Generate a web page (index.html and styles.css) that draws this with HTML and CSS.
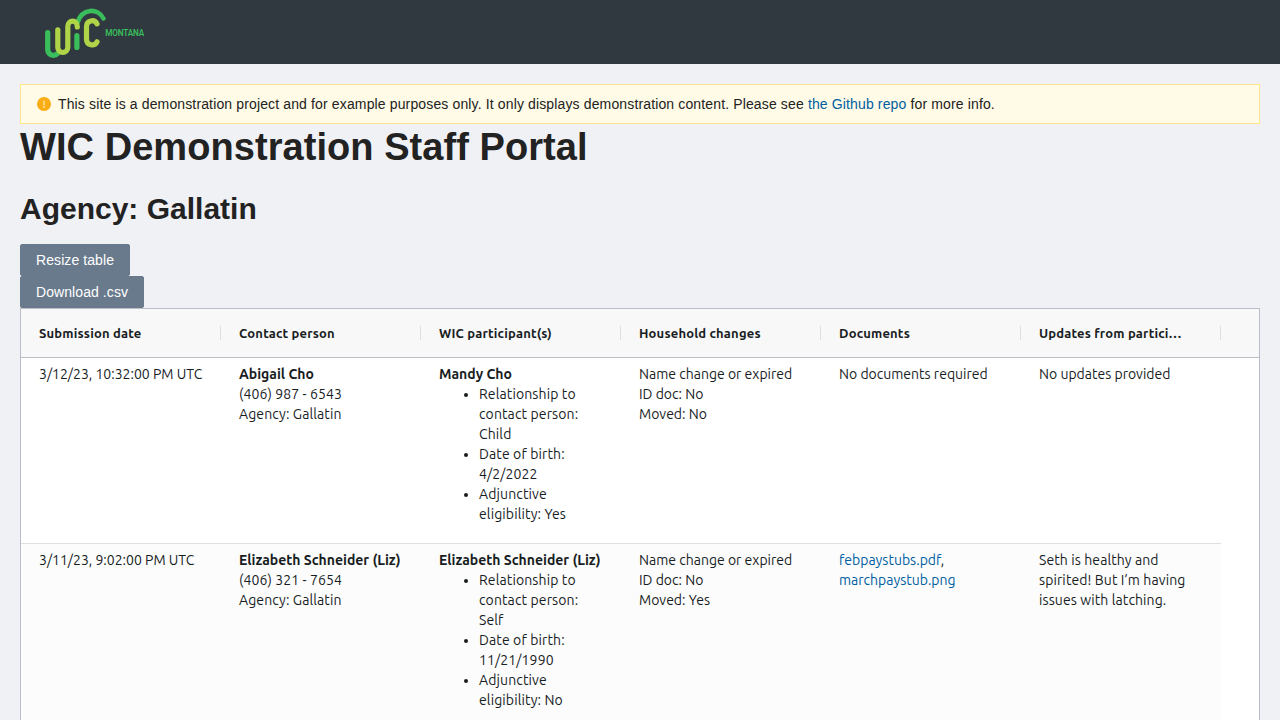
FILE: index.html
```html
<!DOCTYPE html>
<html lang="en">
<head>
<meta charset="utf-8">
<title>WIC Demonstration Staff Portal</title>
<link rel="stylesheet" href="styles.css">
</head>
<body>
<header class="site-header">
  <svg class="logo" viewBox="0 0 102 52" fill="none" stroke-width="5.200" stroke-linecap="round" role="img" aria-label="WIC Montana">
    <path stroke="#3abe5c" d="M2.700 25.500V42.500a5.800 5.800 0 0 0 9.800 4.200M31.900 28.500V40.500"/>
    <path stroke="#3abe5c" stroke-width="4.600" d="M32.500 15.500C37 1 53 .500 58.500 11.500"/>
    <path stroke="#b0d447" d="M12.800 22.800V40.500a5 5 0 0 0 10 0V19.500c0-7.100 9.500-7.100 9.500 0v.5M52 16.800c-2.500-5-10.500-3.500-10.500 2.500v13c0 6 8 7.500 10.500 2.500"/>
    <text class="logo-state" transform="translate(60.200 28.800) scale(.86 1)" x="0" y="0" textLength="45.300" lengthAdjust="spacing">MONTANA</text>
  </svg>
</header>
<main class="page">
  <div class="alert">
    <svg class="alert-icon" viewBox="0 0 14 14"><circle cx="7" cy="7" r="7" fill="#faad14"/><path fill="#fff3cf" d="M6.500 3.500h1v5h-1zM6.300 9.300h1.400v1.400H6.300z"/></svg>
    <div>This site is a demonstration project and for example purposes only. It only displays demonstration content. Please see <a href="#">the Github repo</a> for more info.</div>
  </div>
  <h1>WIC Demonstration Staff Portal</h1>
  <h2>Agency: Gallatin</h2>
  <div class="actions">
    <button class="btn" type="button">Resize table</button>
    <button class="btn" type="button">Download .csv</button>
  </div>
  <div class="grid">
    <div class="grid-head">
      <div class="head-cell">Submission date</div>
      <div class="head-cell">Contact person</div>
      <div class="head-cell">WIC participant(s)</div>
      <div class="head-cell">Household changes</div>
      <div class="head-cell">Documents</div>
      <div class="head-cell">Updates from partici…</div>
    </div>
    <div class="grid-row">
      <div class="cell">3/12/23, 10:32:00 PM UTC</div>
      <div class="cell"><strong>Abigail Cho</strong><br><span class="contact">(406) 987 - 6543<br>Agency: Gallatin</span></div>
      <div class="cell"><strong>Mandy Cho</strong>
        <ul><li>Relationship to<br>contact person:<br>Child</li><li>Date of birth:<br>4/2/2022</li><li>Adjunctive<br>eligibility: Yes</li></ul></div>
      <div class="cell">Name change or expired<br>ID doc: No<br>Moved: No</div>
      <div class="cell">No documents required</div>
      <div class="cell">No updates provided</div>
    </div>
    <div class="grid-row odd">
      <div class="cell">3/11/23, 9:02:00 PM UTC</div>
      <div class="cell"><strong>Elizabeth Schneider (Liz)</strong><br><span class="contact">(406) 321 - 7654<br>Agency: Gallatin</span></div>
      <div class="cell"><strong>Elizabeth Schneider (Liz)</strong>
        <ul><li>Relationship to<br>contact person:<br>Self</li><li>Date of birth:<br>11/21/1990</li><li>Adjunctive<br>eligibility: No</li></ul></div>
      <div class="cell">Name change or expired<br>ID doc: No<br>Moved: Yes</div>
      <div class="cell"><a href="#">febpaystubs.pdf</a>,<br><a href="#">marchpaystub.png</a></div>
      <div class="cell update">Seth is healthy and<br>spirited! But I’m having<br>issues with latching.</div>
    </div>
  </div>
</main>
</body>
</html>
```
FILE: styles.css
```css
* { box-sizing: border-box; }
body {
  margin: 0;
  background: #f0f1f5;
  color: #222;
  font: 14px/22px "Liberation Sans", Arial, sans-serif;
}
a { color: #005ea2; text-decoration: none; }
.site-header { height: 64px; padding: 7px 0 0 45px; background: #303840; }
.logo { display: block; width: 102px; height: 52px; overflow: visible; }
.logo-state { font: 600 9.500px Roboto, sans-serif; fill: #3abe5c; stroke: none; }
.page { padding: 20px 20px 0; }
.alert {
  display: flex;
  align-items: center;
  gap: 7px;
  height: 40px;
  padding: 0 16px;
  background: #fffbe6;
  border: 1px solid #ffe58f;
  letter-spacing: 0.137px;
}
.alert-icon { width: 14px; height: 14px; }
h1 { margin: 0 0 19px; font-size: 38px; line-height: 46px; letter-spacing: 0.06px; }
h2 { margin: 0 0 16px; font-size: 30px; line-height: 39px; }
.actions { display: flex; flex-direction: column; align-items: flex-start; }
.btn {
  height: 32px;
  padding: 0 15px;
  border: 1px solid #697a8c;
  border-radius: 2px;
  background: #697a8c;
  color: #fff;
  font: 14px "Liberation Sans", Arial, sans-serif;
  letter-spacing: 0.08px;
}
.grid {
  height: 412px;
  overflow: hidden;
  border: 1px solid #babfc7;
  border-bottom: 0;
  background: #fff;
  color: #181d1f;
  font: 14px/20px Ubuntu, "Noto Sans", sans-serif;
}
.grid-head { display: flex; height: 49px; background: #f8f8f8; border-bottom: 1px solid #babfc7; }
.head-cell {
  display: flex;
  align-items: center;
  justify-content: space-between;
  width: 200px;
  padding-left: 18px;
  font-size: 13px;
  font-weight: 700;
  letter-spacing: 0.18px;
  white-space: nowrap;
}
.head-cell::after { content: ""; width: 1px; height: 14px; background: #dddfe3; }
.grid-row { display: flex; width: 1200px; height: 186px; border-bottom: 1px solid #dddfe3; }
.odd { background: #fcfcfc; }
.cell { width: 200px; padding: 6px 0 0 18px; white-space: nowrap; }
.cell ul { margin: 0; padding-left: 40px; letter-spacing: 0.12px; }
.contact, .update { letter-spacing: 0.1px; }
```
